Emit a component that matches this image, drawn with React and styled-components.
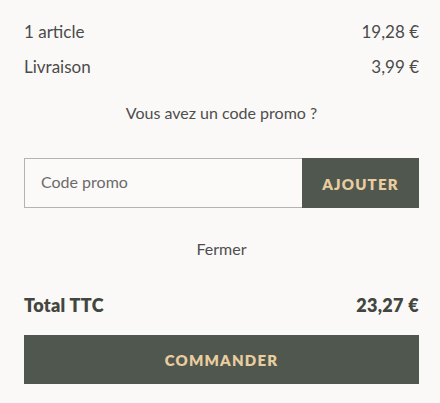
import React from 'react';
import styled, { createGlobalStyle } from 'styled-components';

const GlobalStyle = createGlobalStyle`
  html, body {
    margin: 0;
    background: #faf9f7;
  }
  body {
    font-family: 'Lato', 'Liberation Sans', sans-serif;
    color: #4b4b4b;
  }
`;

function App() {
  return (
    <>
      <GlobalStyle />
      <Summary>
        <Line>
          <span>1 article</span>
          <span>19,28 €</span>
        </Line>
        <Line>
          <span>Livraison</span>
          <span>3,99 €</span>
        </Line>
        <PromoToggle>Vous avez un code promo ?</PromoToggle>
        <PromoForm>
          <PromoInput placeholder="Code promo" />
          <AddButton>Ajouter</AddButton>
        </PromoForm>
        <CloseLink>Fermer</CloseLink>
        <Line $total>
          <span>Total TTC</span>
          <span>23,27 €</span>
        </Line>
        <OrderButton>Commander</OrderButton>
      </Summary>
    </>
  );
}

const Summary = styled.div`
  display: flex;
  flex-direction: column;
  padding: 19px 21px 19px 24px;
`;

const Line = styled.div`
  display: flex;
  justify-content: space-between;
  align-items: center;
  height: 24px;
  font-size: ${(p) => (p.$total ? '18px' : '17px')};
  font-weight: ${(p) => (p.$total ? 800 : 400)};
  letter-spacing: ${(p) => (p.$total ? '0.3px' : '0')};
  margin-bottom: ${(p) => (p.$total ? '18px' : '11px')};
  color: ${(p) => (p.$total ? '#43463f' : '#4b4b4b')};
`;

const PromoToggle = styled.div`
  text-align: center;
  font-size: 16px;
  line-height: 20px;
  margin-top: 14px;
  margin-bottom: 35px;
  color: #4e4e4e;
`;

const PromoForm = styled.div`
  display: flex;
  height: 50px;
`;

const PromoInput = styled.input`
  flex: 1;
  min-width: 0;
  box-sizing: border-box;
  height: 100%;
  border: 1px solid #b3b3b3;
  border-right: none;
  background: #fbfaf9;
  padding: 0 0 4px 16px;
  font-family: inherit;
  font-size: 16px;
  color: #4b4b4b;
  outline: none;
  &::placeholder {
    color: #6b6b6b;
  }
`;

const AddButton = styled.button`
  width: 117px;
  height: 100%;
  border: none;
  background: #4f574f;
  color: #e9cd9f;
  font-family: inherit;
  font-weight: 800;
  font-size: 15px;
  letter-spacing: 1.2px;
  text-transform: uppercase;
  padding: 2px 0 0;
`;

const CloseLink = styled.div`
  text-align: center;
  font-size: 16px;
  line-height: 20px;
  margin-top: 31px;
  margin-bottom: 34px;
  color: #4e4e4e;
`;

const OrderButton = styled.button`
  height: 49px;
  border: none;
  background: #4f574f;
  color: #e9cd9f;
  font-family: inherit;
  font-weight: 800;
  font-size: 15px;
  letter-spacing: 1.2px;
  text-transform: uppercase;
`;

export default App;
